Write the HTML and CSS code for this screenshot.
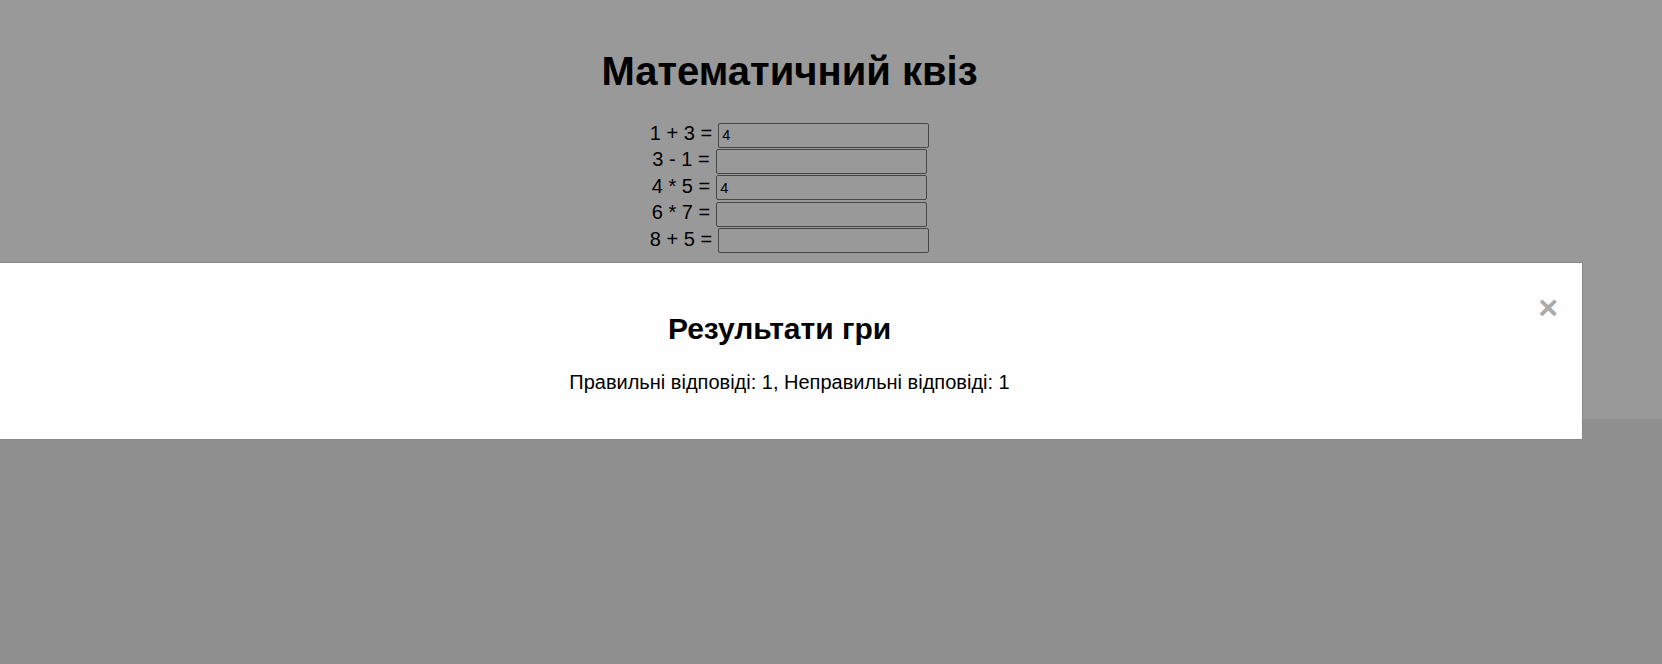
FILE: index.html
```html
<!DOCTYPE html>
<html lang="uk">
<head>
<meta charset="utf-8">
<title>Математичний квіз</title>
<link rel="stylesheet" href="styles.css">
</head>
<body>
<div class="page">
  <div class="content">
    <h1 class="title">Математичний квіз</h1>
    <div class="quiz">
      <div class="row"><span class="label">1 + 3 =</span><input class="answer" type="text" value="4"></div>
      <div class="row"><span class="label">3 - 1 =</span><input class="answer" type="text" value=""></div>
      <div class="row"><span class="label">4 * 5 =</span><input class="answer" type="text" value="4"></div>
      <div class="row"><span class="label">6 * 7 =</span><input class="answer" type="text" value=""></div>
      <div class="row"><span class="label">8 + 5 =</span><input class="answer" type="text" value=""></div>
    </div>
  </div>
</div>
<div class="overlay">
  <div class="modal">
    <span class="close">&times;</span>
    <h2 class="modal-title">Результати гри</h2>
    <p class="modal-text">Правильні відповіді: 1, Неправильні відповіді: 1</p>
  </div>
</div>
</body>
</html>
```
FILE: styles.css
```css
html, body {
  margin: 0;
  padding: 0;
}
body {
  background: #efefef;
  font-family: "Liberation Sans", Arial, sans-serif;
  font-size: 20px;
  color: #000;
}
.page {
  background: #fff;
  height: 419px;
}
.content {
  width: 1579px;
  text-align: center;
  padding-top: 49px;
}
.title {
  font-size: 40px;
  font-weight: bold;
  margin: 0 0 28px 0;
}
.quiz {
  display: flex;
  flex-direction: column;
  align-items: center;
}
.row {
  display: flex;
  align-items: baseline;
  justify-content: center;
  height: 26.4px;
  font-size: 20px;
}
.label {
  margin-right: 6px;
}
.answer {
  box-sizing: border-box;
  width: 211px;
  height: 25px;
  margin: 0;
  padding: 1px 3px;
  border: 1px solid #767676;
  border-radius: 2px;
  background: #fff;
  font-family: "Liberation Sans", Arial, sans-serif;
  font-size: 14.5px;
  color: #000;
}
.overlay {
  position: fixed;
  left: 0;
  top: 0;
  width: 100%;
  height: 100%;
  background: rgba(0, 0, 0, 0.4);
  padding-top: 262px;
  box-sizing: border-box;
}
.modal {
  box-sizing: border-box;
  width: 1587px;
  margin-left: -4px;
  background: #fefefe;
  border: 1px solid #888;
  padding: 20px;
  text-align: center;
}
.close {
  float: right;
  position: relative;
  left: -4px;
  color: #aaa;
  font-size: 34px;
  font-weight: bold;
  line-height: 34px;
  margin-top: 7px;
}
.modal-title {
  font-size: 30px;
  font-weight: bold;
  margin: 29px 0 0 0;
}
.modal-text {
  font-size: 20px;
  margin: 25px 0 25px 0;
}
```
